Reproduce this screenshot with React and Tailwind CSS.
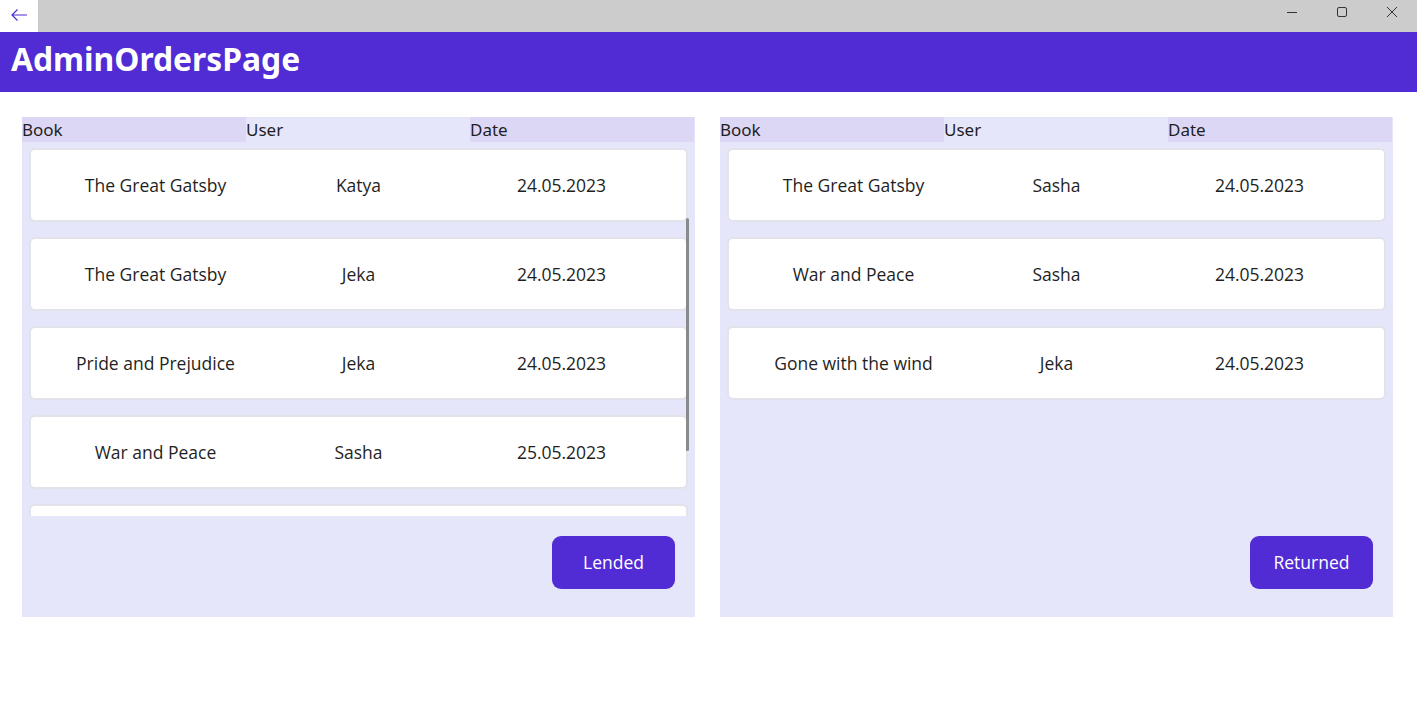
import React from 'react';

const lended = [
  { book: 'The Great Gatsby', user: 'Katya', date: '24.05.2023' },
  { book: 'The Great Gatsby', user: 'Jeka', date: '24.05.2023' },
  { book: 'Pride and Prejudice', user: 'Jeka', date: '24.05.2023' },
  { book: 'War and Peace', user: 'Sasha', date: '25.05.2023' },
  { book: 'Anna Karenina', user: 'Katya', date: '25.05.2023' },
];

const returned = [
  { book: 'The Great Gatsby', user: 'Sasha', date: '24.05.2023' },
  { book: 'War and Peace', user: 'Sasha', date: '24.05.2023' },
  { book: 'Gone with the wind', user: 'Jeka', date: '24.05.2023' },
];

const OrderCard = ({ order }) => (
  <div className="h-[74px] shrink-0 bg-white border-2 border-[#e2e2ea] rounded-[6px] grid grid-cols-3 items-center px-[23px] text-[17.5px] text-[#1f1f1f] font-['Open_Sans',sans-serif]">
    <span className="text-center whitespace-nowrap">{order.book}</span>
    <span className="text-center whitespace-nowrap">{order.user}</span>
    <span className="text-center whitespace-nowrap">{order.date}</span>
  </div>
);

const OrdersPanel = ({ orders, label, scrollbar }) => (
  <div className="flex-1 h-[500px] bg-[#e6e6fa] flex flex-col">
    <div className="grid grid-cols-3 h-[24px] pr-[1px] text-[17px] leading-[25px] text-[#1f1f1f] font-['Noto_Sans',sans-serif]">
      <span className="bg-[#ddd7f6]">Book</span>
      <span>User</span>
      <span className="bg-[#ddd7f6]">Date</span>
    </div>
    <div className="relative h-[375px] overflow-hidden px-[7px] pt-[7px] flex flex-col gap-[15px]">
      {orders.map((o, i) => (
        <OrderCard key={i} order={o} />
      ))}
      {scrollbar && (
        <div className="absolute right-[6px] top-[77px] w-[3px] h-[233px] rounded-full bg-[#8a8a8a]" />
      )}
    </div>
    <div className="flex-1 flex items-start justify-end pr-[20px] pt-[20px]">
      <button className="w-[123px] h-[53px] rounded-[9px] bg-[#512bd4] text-white text-[17.5px] font-['Open_Sans',sans-serif]">
        {label}
      </button>
    </div>
  </div>
);

const App = () => {
  return (
    <div className="w-[1417px] h-[719px] bg-white flex flex-col">
      <div className="h-[32px] bg-[#cccccc] flex items-center">
        <div className="w-[38px] h-[32px] bg-white flex items-center justify-center pb-[3px]">
          <svg width="18" height="14" viewBox="0 0 18 14" fill="none" stroke="#512bd4" strokeWidth="1.2">
            <path d="M17 7H2M7.5 1.5L2 7l5.5 5.5" />
          </svg>
        </div>
        <div className="flex-1" />
        <div className="flex items-center h-full">
          <div className="w-[50px] h-full flex items-center justify-center pb-[9px]">
            <svg width="12" height="12" viewBox="0 0 12 12" stroke="#333" strokeWidth="1"><path d="M1 6.5h10" /></svg>
          </div>
          <div className="w-[50px] h-full flex items-center justify-center pb-[9px]">
            <svg width="12" height="12" viewBox="0 0 12 12" fill="none" stroke="#333" strokeWidth="1"><rect x="1.5" y="1.5" width="9" height="9" rx="1.5" /></svg>
          </div>
          <div className="w-[50px] h-full flex items-center justify-center pb-[9px]">
            <svg width="12" height="12" viewBox="0 0 12 12" stroke="#333" strokeWidth="1"><path d="M1 1l10 10M11 1L1 11" /></svg>
          </div>
        </div>
      </div>
      <div className="h-[60px] bg-[#512bd4] flex items-center px-[11px] pb-[6px]">
        <h1 className="text-white text-[31.8px] font-bold font-['Noto_Sans',sans-serif] leading-none">AdminOrdersPage</h1>
      </div>
      <div className="flex gap-[25px] pl-[22px] pr-[24px] pt-[25px]">
        <OrdersPanel orders={lended} label="Lended" scrollbar />
        <OrdersPanel orders={returned} label="Returned" />
      </div>
    </div>
  );
};

export default App;
